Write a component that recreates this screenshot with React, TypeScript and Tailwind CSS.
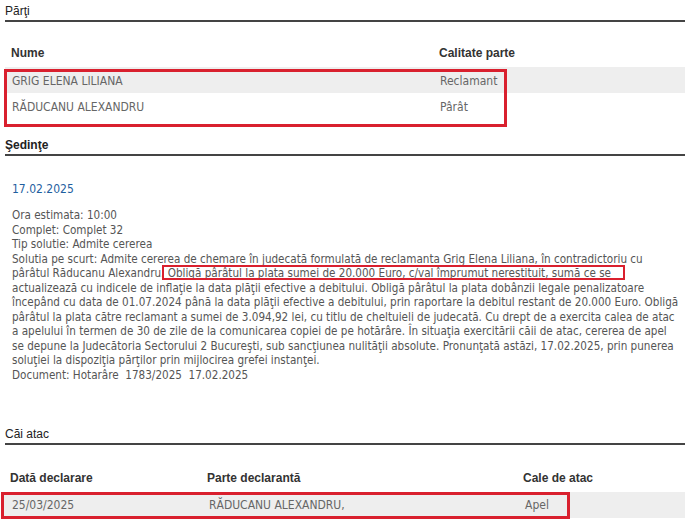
const body = "font-['DejaVu_Sans_Condensed','DejaVu_Sans',sans-serif] font-stretch-condensed";
const head = "font-['Liberation_Sans',Arial,sans-serif]";

const lines = [
  'Ora estimata: 10:00',
  'Complet: Complet 32',
  'Tip solutie: Admite cererea',
  'Solutia pe scurt: Admite cererea de chemare în judecată formulată de reclamanta Grig Elena Liliana, în contradictoriu cu',
  'pârâtul Răducanu Alexandru. Obligă pârâtul la plata sumei de 20.000 Euro, c/val împrumut nerestituit, sumă ce se',
  'actualizează cu indicele de inflaţie la data plăţii efective a debitului. Obligă pârâtul la plata dobânzii legale penalizatoare',
  'începând cu data de 01.07.2024 până la data plăţii efective a debitului, prin raportare la debitul restant de 20.000 Euro. Obligă',
  'pârâtul la plata către reclamant a sumei de 3.094,92 lei, cu titlu de cheltuieli de judecată. Cu drept de a exercita calea de atac',
  'a apelului în termen de 30 de zile de la comunicarea copiei de pe hotărâre. În situaţia exercitării căii de atac, cererea de apel',
  'se depune la Judecătoria Sectorului 2 Bucureşti, sub sancţiunea nulităţii absolute. Pronunţată astăzi, 17.02.2025, prin punerea',
  'soluţiei la dispoziţia părţilor prin mijlocirea grefei instanţei.',
  'Document: Hotarâre  1783/2025  17.02.2025',
];

function Heading({ children, bold = false }: { children: string; bold?: boolean }) {
  return (
    <h3
      className={`${head} ml-[5px] h-[22px] pt-[2px] border-b-2 border-[#444] text-[12px] leading-[18px] text-[#222] ${
        bold ? 'font-bold' : 'font-normal'
      }`}
    >
      {children}
    </h3>
  );
}

export default function App() {
  return (
    <div className="w-[685px] h-[522px] bg-white overflow-hidden">
      {/* Părţi */}
      <Heading>Părţi</Heading>
      <div className="relative ml-[5px] mt-[17px]">
        <div className={`${head} grid grid-cols-[428px_1fr] h-[28px] items-center text-[12px] font-bold text-[#333]`}>
          <div className="pl-[6px]">Nume</div>
          <div className="pl-[6px]">Calitate parte</div>
        </div>
        <div className={`${body} grid grid-cols-[428px_1fr] h-[26px] items-center pt-[1px] bg-[#eeeeee] text-[12px] text-[#666]`}>
          <div className="pl-[7px]">GRIG ELENA LILIANA</div>
          <div className="pl-[7px]">Reclamant</div>
        </div>
        <div className={`${body} grid grid-cols-[428px_1fr] h-[27px] items-center pt-[1px] text-[12px] text-[#666]`}>
          <div className="pl-[7px]">RĂDUCANU ALEXANDRU</div>
          <div className="pl-[7px]">Pârât</div>
        </div>
        <div className="absolute left-[-1px] top-[30px] w-[503px] h-[58px] border-[3px] border-[#d9202e]" />
      </div>

      {/* Şedinţe */}
      <div className="mt-[14px]">
        <Heading bold>Şedinţe</Heading>
        <div className={`${body} ml-[12px] mt-[26px] text-[12px] leading-[15px] text-[#1f5f9f]`}>17.02.2025</div>
        <div className={`${body} relative ml-[12px] mt-[11px] text-[11.6px] leading-[14.5px] text-[#555]`}>
          {lines.map((l, i) => (
            <div key={i} className="whitespace-pre">
              {l}
            </div>
          ))}
          <div className="absolute left-[150px] top-[57px] w-[463px] h-[15px] border-2 border-[#d9202e]" />
        </div>
      </div>

      {/* Căi atac */}
      <div className="mt-[41px]">
        <Heading>Căi atac</Heading>
        <div className="relative ml-[2px] mt-[19px]">
          <div className={`${head} grid grid-cols-[197px_316px_1fr] h-[28px] items-center text-[12px] font-bold text-[#333]`}>
            <div className="pl-[8px]">Dată declarare</div>
            <div className="pl-[8px]">Parte declarantă</div>
            <div className="pl-[8px]">Cale de atac</div>
          </div>
          <div className={`${body} grid grid-cols-[197px_316px_1fr] h-[26px] items-center bg-[#eeeeee] text-[12px] text-[#666]`}>
            <div className="pl-[10px]">25/03/2025</div>
            <div className="pl-[10px]">RĂDUCANU ALEXANDRU,</div>
            <div className="pl-[10px]">Apel</div>
          </div>
          <div className="absolute left-[-1px] top-[28px] w-[569px] h-[27px] border-[3px] border-[#d9202e]" />
        </div>
      </div>
    </div>
  );
}
